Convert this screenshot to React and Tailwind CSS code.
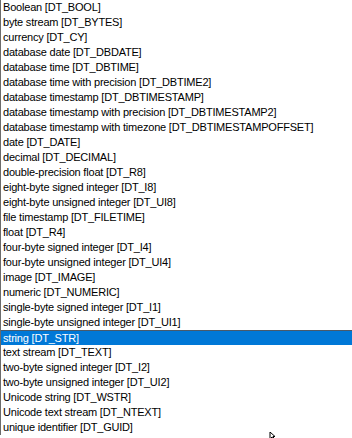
import React from "react";

const items = [
  "Boolean [DT_BOOL]",
  "byte stream [DT_BYTES]",
  "currency [DT_CY]",
  "database date [DT_DBDATE]",
  "database time [DT_DBTIME]",
  "database time with precision [DT_DBTIME2]",
  "database timestamp [DT_DBTIMESTAMP]",
  "database timestamp with precision [DT_DBTIMESTAMP2]",
  "database timestamp with timezone [DT_DBTIMESTAMPOFFSET]",
  "date [DT_DATE]",
  "decimal [DT_DECIMAL]",
  "double-precision float [DT_R8]",
  "eight-byte signed integer [DT_I8]",
  "eight-byte unsigned integer [DT_UI8]",
  "file timestamp [DT_FILETIME]",
  "float [DT_R4]",
  "four-byte signed integer [DT_I4]",
  "four-byte unsigned integer [DT_UI4]",
  "image [DT_IMAGE]",
  "numeric [DT_NUMERIC]",
  "single-byte signed integer [DT_I1]",
  "single-byte unsigned integer [DT_UI1]",
  "string [DT_STR]",
  "text stream [DT_TEXT]",
  "two-byte signed integer [DT_I2]",
  "two-byte unsigned integer [DT_UI2]",
  "Unicode string [DT_WSTR]",
  "Unicode text stream [DT_NTEXT]",
  "unique identifier [DT_GUID]",
];

export default function App() {
  return (
    <div
      className="relative w-[352px] h-[438px] bg-white overflow-hidden text-[11px] tracking-[-0.2px] text-black"
      style={{ fontFamily: '"Liberation Sans", Arial, sans-serif' }}
    >
      <div className="flex flex-col border-l border-[#6b6b6b]">
        {items.map((t, i) =>
          i === 22 ? (
            <div
              key={i}
              className="h-[15px] leading-[14px] pl-[2px] bg-[#0078d7] text-white border-t border-[#4a5a6a] whitespace-nowrap"
            >
              {t}
            </div>
          ) : (
            <div key={i} className="h-[15px] leading-[15px] pl-[2px] whitespace-nowrap">
              {t}
            </div>
          )
        )}
      </div>
      <svg
        className="absolute left-[269px] top-[432px]"
        width="8"
        height="8"
        viewBox="0 0 8 8"
      >
        <path d="M1 0 L1 7 L3 5 L4.5 8 L5.5 7.5 L4 4.5 L6 4.5 Z" fill="white" stroke="black" strokeWidth="1" />
      </svg>
    </div>
  );
}
